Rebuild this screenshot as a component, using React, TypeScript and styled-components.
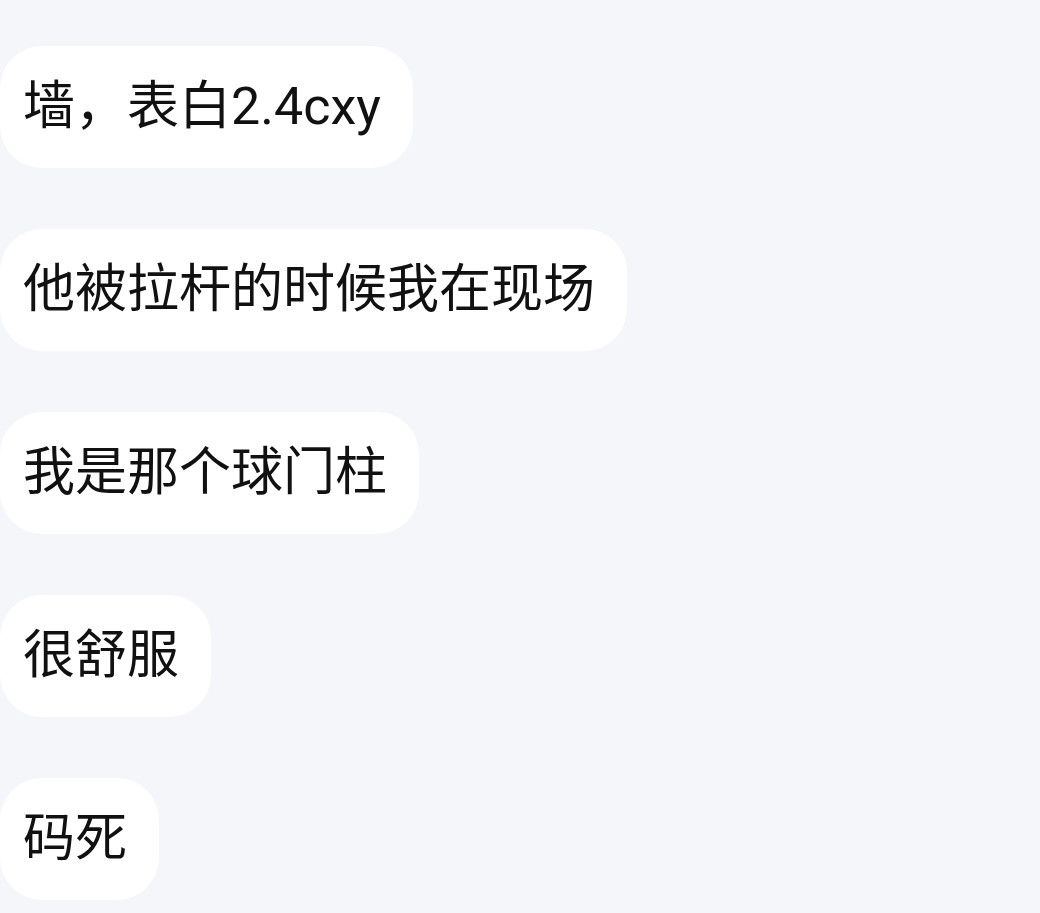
import React from "react";
import styled, { createGlobalStyle } from "styled-components";

const GlobalStyle = createGlobalStyle`
  html, body {
    margin: 0;
    padding: 0;
    background: #f5f6fa;
  }
  body {
    font-family: Roboto, "Noto Sans CJK SC", sans-serif;
  }
`;

const Page = styled.div`
  width: 1040px;
  height: 913px;
  overflow: hidden;
  background: #f5f6fa;
  display: flex;
  flex-direction: column;
  align-items: flex-start;
  gap: 61px;
  padding-top: 46px;
  box-sizing: border-box;
`;

const Bubble = styled.div`
  height: 122px;
  display: flex;
  align-items: center;
  box-sizing: border-box;
  padding: 0 32px 0 23px;
  background: #ffffff;
  border-radius: 42px;
  color: #111111;
  font-family: Roboto, "Noto Sans CJK SC", sans-serif;
  font-size: 52px;
  line-height: 1;
  white-space: nowrap;
`;

const messages = [
  "墙，表白2.4cxy",
  "他被拉杆的时候我在现场",
  "我是那个球门柱",
  "很舒服",
  "码死",
];

export default function App() {
  return (
    <>
      <GlobalStyle />
      <Page>
        {messages.map((m) => (
          <Bubble key={m}>{m}</Bubble>
        ))}
      </Page>
    </>
  );
}
